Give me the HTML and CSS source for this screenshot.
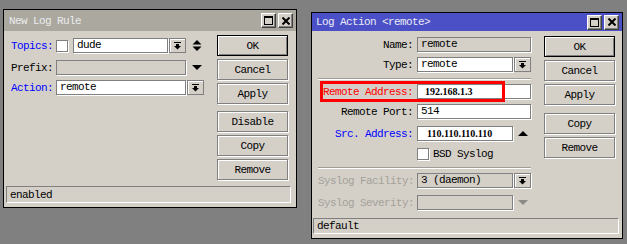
FILE: index.html
```html
<!DOCTYPE html>
<html>
<head>
<meta charset="utf-8">
<link rel="stylesheet" href="styles.css">
</head>
<body>
<div class="desk">
  <div class="win rule">
    <div class="title inactive">
      <span class="ttext">New Log Rule</span>
      <span class="tbtns">
        <span class="tbtn"><svg width="9" height="9" viewBox="0 0 9 9"><rect x="0.5" y="0.5" width="8" height="8" fill="none" stroke="#000"/><rect x="0" y="0" width="9" height="2" fill="#000"/></svg></span>
        <span class="tbtn"><svg width="8" height="8" viewBox="0 0 8 8"><path d="M0.5 0.5 L7.5 7.5 M7.5 0.5 L0.5 7.5" stroke="#000" stroke-width="2"/></svg></span>
      </span>
    </div>
    <div class="body">
      <div class="form">
        <div class="row">
          <span class="lbl blue w45">Topics:</span>
          <span class="chk"></span>
          <span class="inp w95 gap1">dude</span>
          <span class="dd"><svg width="7" height="8" viewBox="0 0 7 8"><rect x="0" y="0" width="7" height="1" fill="#000"/><rect x="2" y="2" width="3" height="2" fill="#000"/><path d="M0 4 H7 L3.5 7.5 Z" fill="#000"/></svg></span>
          <span class="arr ml6"><svg width="10" height="11" viewBox="0 0 10 11"><path d="M0.5 4.5 L5 0 L9.5 4.5 Z M0.5 6.5 L9.5 6.5 L5 11 Z" fill="#000"/></svg></span>
        </div>
        <div class="row mt7">
          <span class="lbl w45">Prefix:</span>
          <span class="inp dis w130"></span>
          <span class="arr ml6"><svg width="10" height="5" viewBox="0 0 10 5"><path d="M0 0 H10 L5 5 Z" fill="#000"/></svg></span>
        </div>
        <div class="row mt5">
          <span class="lbl blue w45">Action:</span>
          <span class="inp w130 gap1">remote</span>
          <span class="dd"><svg width="7" height="8" viewBox="0 0 7 8"><rect x="0" y="0" width="7" height="1" fill="#000"/><rect x="2" y="2" width="3" height="2" fill="#000"/><path d="M0 4 H7 L3.5 7.5 Z" fill="#000"/></svg></span>
        </div>
      </div>
      <div class="btns left-btns">
        <span class="btn default">OK</span>
        <span class="btn">Cancel</span>
        <span class="btn">Apply</span>
        <span class="btn mt-grp">Disable</span>
        <span class="btn">Copy</span>
        <span class="btn">Remove</span>
      </div>
    </div>
    <div class="status">enabled</div>
  </div>

  <div class="win action">
    <div class="title active">
      <span class="ttext">Log Action &lt;remote&gt;</span>
      <span class="tbtns">
        <span class="tbtn"><svg width="9" height="9" viewBox="0 0 9 9"><rect x="0.5" y="0.5" width="8" height="8" fill="none" stroke="#000"/><rect x="0" y="0" width="9" height="2" fill="#000"/></svg></span>
        <span class="tbtn"><svg width="8" height="8" viewBox="0 0 8 8"><path d="M0.5 0.5 L7.5 7.5 M7.5 0.5 L0.5 7.5" stroke="#000" stroke-width="2"/></svg></span>
      </span>
    </div>
    <div class="body">
      <div class="form rform">
        <div class="row">
          <span class="lbl rl">Name:</span>
          <span class="inp dis w114">remote</span>
        </div>
        <div class="row mt5">
          <span class="lbl rl">Type:</span>
          <span class="inp w96 gap1">remote</span>
          <span class="dd"><svg width="7" height="8" viewBox="0 0 7 8"><rect x="0" y="0" width="7" height="1" fill="#000"/><rect x="2" y="2" width="3" height="2" fill="#000"/><path d="M0 4 H7 L3.5 7.5 Z" fill="#000"/></svg></span>
        </div>
        <div class="sep sep1"></div>
        <div class="row mt4 marked">
          <span class="lbl rl red">Remote Address:</span>
          <span class="inp w114 ip ip1">192.168.1.3</span>
          <span class="mark"></span>
        </div>
        <div class="row mt5">
          <span class="lbl rl">Remote Port:</span>
          <span class="inp w114">514</span>
        </div>
        <div class="row mt7">
          <span class="lbl rl blue">Src. Address:</span>
          <span class="inp w96 ip ip2">110.110.110.110</span>
          <span class="arr ml5"><svg width="10" height="5" viewBox="0 0 10 5"><path d="M0 5 H10 L5 0 Z" fill="#000"/></svg></span>
        </div>
        <div class="row mt5">
          <span class="lbl rl"></span>
          <span class="chk"></span>
          <span class="chktext">BSD Syslog</span>
        </div>
        <div class="sep sep2"></div>
        <div class="row mt4">
          <span class="lbl rl grey">Syslog Facility:</span>
          <span class="inp dis w96 gap1">3 (daemon)</span>
          <span class="dd dd-hl"><svg width="7" height="8" viewBox="0 0 7 8"><rect x="0" y="0" width="7" height="1" fill="#000"/><rect x="2" y="2" width="3" height="2" fill="#000"/><path d="M0 4 H7 L3.5 7.5 Z" fill="#000"/></svg></span>
        </div>
        <div class="row mt7">
          <span class="lbl rl grey">Syslog Severity:</span>
          <span class="inp dis w96"></span>
          <span class="arr ml5"><svg width="10" height="5" viewBox="0 0 10 5"><path d="M0 0 H10 L5 5 Z" fill="#8c8a84"/></svg></span>
        </div>
      </div>
      <div class="btns right-btns">
        <span class="btn default">OK</span>
        <span class="btn">Cancel</span>
        <span class="btn">Apply</span>
        <span class="btn mt-grp">Copy</span>
        <span class="btn">Remove</span>
      </div>
    </div>
    <div class="status">default</div>
  </div>
</div>
</body>
</html>
```

FILE: styles.css
```css
* { box-sizing: border-box; }
html, body {
  margin: 0;
  padding: 0;
  background: #808080;
  width: 627px;
  height: 244px;
  overflow: hidden;
}
body {
  font-family: "Liberation Mono", "DejaVu Sans Mono", monospace;
  font-size: 11px;
  letter-spacing: -0.6px;
  color: #000;
}
.desk {
  display: flex;
  align-items: flex-start;
  padding-left: 3px;
}
.win {
  border: 1px solid #000;
  background: #d4d0c8;
  display: flex;
  flex-direction: column;
}
.win.rule { width: 294px; height: 199px; margin-top: 9px; }
.win.action { width: 312px; height: 227px; margin-top: 12px; margin-left: 14px; }

.title {
  display: flex;
  align-items: center;
  justify-content: space-between;
  padding: 0 3px 0 5px;
}
.rule .title { height: 21px; }
.action .title { height: 18px; padding-left: 4px; }
.title.inactive { background: #aba8a0; color: #ececec; }
.title.active { background: #4b50c7; color: #ececf4; }
.tbtns { display: flex; gap: 2px; }
.tbtn {
  width: 15px;
  height: 15px;
  background: #d4d0c8;
  border: 1px solid;
  border-color: #fff #404040 #404040 #fff;
  box-shadow: inset -1px -1px 0 #808080;
  display: flex;
  align-items: center;
  justify-content: center;
}

.body { display: flex; flex: 1; }
.rule .body { padding: 0 8px 0 7px; gap: 13px; }
.action .body { padding: 0 7px 0 6px; gap: 13px; }
.form { display: flex; flex-direction: column; }
.rule .form { width: 193px; padding-top: 7px; }
.rform { width: 213px; padding-top: 6px; }

.row {
  display: flex;
  align-items: center;
  height: 15px;
  position: relative;
}
.mt4 { margin-top: 4px; }
.mt5 { margin-top: 5px; }
.mt7 { margin-top: 7px; }
.lbl { white-space: pre; flex: none; }
.w45 { width: 45px; }
.rl { width: 95px; margin-right: 4px; text-align: right; }
.blue { color: #0000ff; }
.red { color: #ff0000; }
.grey { color: #a4a19a; }

.inp {
  height: 15px;
  background: #fff;
  border: 1px solid #808080;
  box-shadow: 1px 1px 0 #fff;
  padding-left: 3px;
  line-height: 13px;
  white-space: pre;
  flex: none;
}
.inp.dis { background: #d4d0c8; }
.w95 { width: 95px; }
.w96 { width: 96px; }
.w114 { width: 114px; }
.w130 { width: 130px; }
.gap1 { margin-right: 1px; }
.ip {
  font-family: "Liberation Serif", serif;
  font-weight: bold;
  font-size: 10px;
  letter-spacing: 0;
}
.ip1 { padding-left: 7px; }
.ip2 { padding-left: 9px; }

.chk {
  width: 12px;
  height: 12px;
  background: #fff;
  border: 1px solid #808080;
  box-shadow: 1px 1px 0 #fff;
  margin-right: 5px;
  flex: none;
}
.chktext { margin-left: -1px; }

.dd {
  width: 17px;
  height: 15px;
  border: 1px solid #808080;
  box-shadow: inset 1px 1px 0 #fff;
  display: flex;
  align-items: center;
  justify-content: center;
  flex: none;
}
.dd-hl { box-shadow: inset 1px 1px 0 #fff, 1px 1px 0 #fff; }
.arr { width: 10px; display: flex; justify-content: center; flex: none; }
.ml5 { margin-left: 5px; }
.ml6 { margin-left: 6px; }

.mark {
  position: absolute;
  left: 2px;
  top: -3px;
  width: 185px;
  height: 21px;
  border: 3px solid #ff0000;
}

.sep {
  height: 2px;
  border-top: 1px solid #a09d96;
  border-bottom: 1px solid #fff;
}
.sep1 { margin-top: 6px; }
.sep2 { margin-top: 6px; }

.btns { display: flex; flex-direction: column; gap: 3px; width: 71px; }
.left-btns { padding-top: 4px; }
.right-btns { padding-top: 5px; }
.btn {
  height: 21px;
  border: 1px solid #808080;
  box-shadow: inset 1px 1px 0 #fff, 1px 1px 0 #fff;
  display: flex;
  align-items: center;
  justify-content: center;
}
.btn.default {
  border: 1px solid #000;
  box-shadow: inset 1px 1px 0 #fff, inset -1px -1px 0 #808080;
}
.btn.mt-grp { margin-top: 4px; }
.right-btns .btn.mt-grp { margin-top: 5px; }

.status {
  border: 1px solid;
  border-color: #808080 #fff #fff #808080;
  padding-left: 3px;
  display: flex;
  align-items: center;
}
.rule .status { height: 17px; margin: 0 5px 4px 2px; }
.action .status { height: 16px; margin: 0 3px 4px 1px; }
```
